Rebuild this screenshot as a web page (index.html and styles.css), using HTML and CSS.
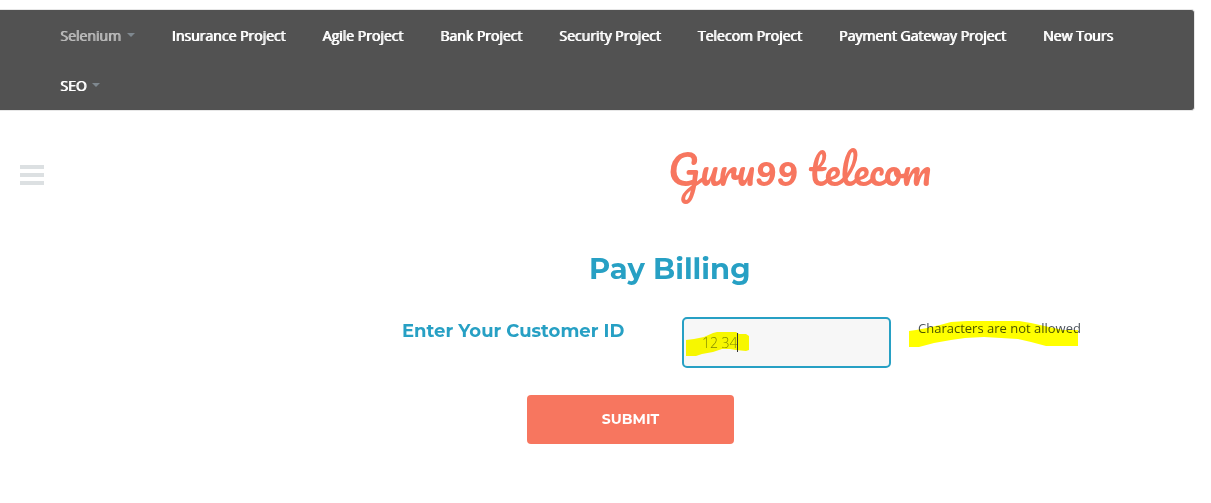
FILE: index.html
```html
<!DOCTYPE html>
<html lang="en">
<head>
<meta charset="utf-8">
<title>Guru99 telecom</title>
<link rel="stylesheet" href="styles.css">
</head>
<body>
<nav class="navbar">
  <ul class="nav-list">
    <li><a class="nav-link nav-link-active" href="#">Selenium <span class="caret"></span></a></li>
    <li><a class="nav-link" href="#">Insurance Project</a></li>
    <li><a class="nav-link" href="#">Agile Project</a></li>
    <li><a class="nav-link" href="#">Bank Project</a></li>
    <li><a class="nav-link" href="#">Security Project</a></li>
    <li><a class="nav-link" href="#">Telecom Project</a></li>
    <li><a class="nav-link" href="#">Payment Gateway Project</a></li>
    <li><a class="nav-link" href="#">New Tours</a></li>
    <li><a class="nav-link" href="#">SEO <span class="caret"></span></a></li>
  </ul>
</nav>
<header class="header">
  <button class="menu-button" type="button" aria-label="Menu"><span class="bar"></span><span class="bar"></span><span class="bar"></span></button>
  <a class="logo" href="#">Guru99 telecom</a>
</header>
<main class="main">
  <h1 class="title">Pay Billing</h1>
  <form class="form">
    <div class="field-row">
      <label class="label" for="customer-id">Enter Your Customer ID</label>
      <div class="field">
        <input class="input" id="customer-id" type="text" value="12 34">
        <svg class="marker marker-value" width="64" height="25" viewBox="0 0 64 25" aria-hidden="true"><path fill="#ff0" d="M0 8L8 7L18 5L27 1L31 0L50 0L53 2L60 2L63 4V18L60 19L50 18L44 17H36L27 20L16 22L10 24H0Z"/></svg>
        <span class="text-cursor"></span>
      </div>
      <div class="message">
        <label class="message-text" for="customer-id">Characters are not allowed</label>
        <svg class="marker marker-message" width="169" height="27" viewBox="0 0 169 27" aria-hidden="true"><path fill="#ff0" d="M0 10L7 9L18 7L31 4L42 1L58 0H110L122 2L140 6L154 9H169V25H137L122 21L109 18L92 17L75 16L56 17L42 19L25 22L10 26H0Z"/></svg>
      </div>
    </div>
    <button class="submit" type="submit">SUBMIT</button>
  </form>
</main>
</body>
</html>
```
FILE: styles.css
```css
* { box-sizing: border-box; }

body {
  margin: 0;
  background: #fff;
  color: #5a5a5a;
  font-family: "Open Sans", sans-serif;
}

.navbar {
  margin: 9px 16px 0 0;
  padding: 0 42px;
  border: 1px solid #e7e7e7;
  border-left: 0;
  border-radius: 0 4px 4px 0;
  background: #525252;
}

.nav-list {
  display: flex;
  flex-wrap: wrap;
  column-gap: 1px;
  margin: 0;
  padding: 0;
  list-style: none;
}

.nav-link {
  display: flex;
  align-items: center;
  gap: 6px;
  height: 50px;
  padding: 0 18px;
  color: #fff;
  font-size: 14px;
  font-weight: 400;
  text-decoration: none;
  text-shadow: 1px 0 currentColor;
}

.nav-link-active { color: #bababa; }

.caret {
  border: 4px solid transparent;
  border-top-color: #7f888f;
  border-bottom: 0;
}

.header {
  display: flex;
  align-items: flex-start;
  height: 64px;
  margin-top: 32px;
  padding: 0 20px;
}

.menu-button {
  display: flex;
  flex-direction: column;
  align-self: center;
  gap: 4px;
  padding: 0;
  border: 0;
  background: none;
}

.bar {
  width: 24px;
  height: 4px;
  background: #dce0e2;
}

.logo {
  margin: 0 auto;
  padding-left: 364px;
  color: #f7765f;
  font-family: Pacifico, Lato, sans-serif;
  font-size: 40px;
  font-weight: 400;
  line-height: 52px;
  text-decoration: none;
}

.main {
  padding: 38px 27px 59px 402px;
}

.title {
  margin: 0;
  padding-left: 187px;
  color: #27a0c4;
  font-family: Montserrat, Inter, sans-serif;
  font-size: 29px;
  font-weight: 700;
  line-height: 48px;
}

.form { margin-top: 24px; }

.field-row {
  display: grid;
  grid-template-columns: 280fr 209fr 293fr;
}

.label {
  color: #27a0c4;
  font-family: Montserrat, Inter, sans-serif;
  font-size: 18px;
  font-weight: 700;
  line-height: 28px;
}

.field,
.message {
  position: relative;
}

.input {
  width: 100%;
  height: 51px;
  padding: 0 18px;
  border: 2px solid #27a0c4;
  border-radius: 5px;
  outline: 0;
  background: #f7f7f7;
  color: #7f888f;
  font-family: "Open Sans", sans-serif;
  font-size: 14px;
  font-weight: 300;
}

.message { padding-left: 27px; }

.message-text {
  display: block;
  color: #4c535b;
  font-size: 13px;
  line-height: 22px;
}

.marker {
  position: absolute;
  mix-blend-mode: multiply;
  pointer-events: none;
}

.marker-value {
  top: 15px;
  left: 4px;
}

.marker-message {
  top: 4px;
  left: 18px;
}

.text-cursor {
  position: absolute;
  top: 16px;
  left: 55px;
  width: 1px;
  height: 19px;
  background: #333;
}

.submit {
  display: block;
  width: 207px;
  height: 49px;
  margin: 27px 0 0 125px;
  padding: 0 0 2px;
  border: 0;
  border-radius: 4px;
  background: #f7765f;
  color: #fff;
  font-family: Montserrat, Inter, sans-serif;
  font-size: 14px;
  font-weight: 700;
}
```
